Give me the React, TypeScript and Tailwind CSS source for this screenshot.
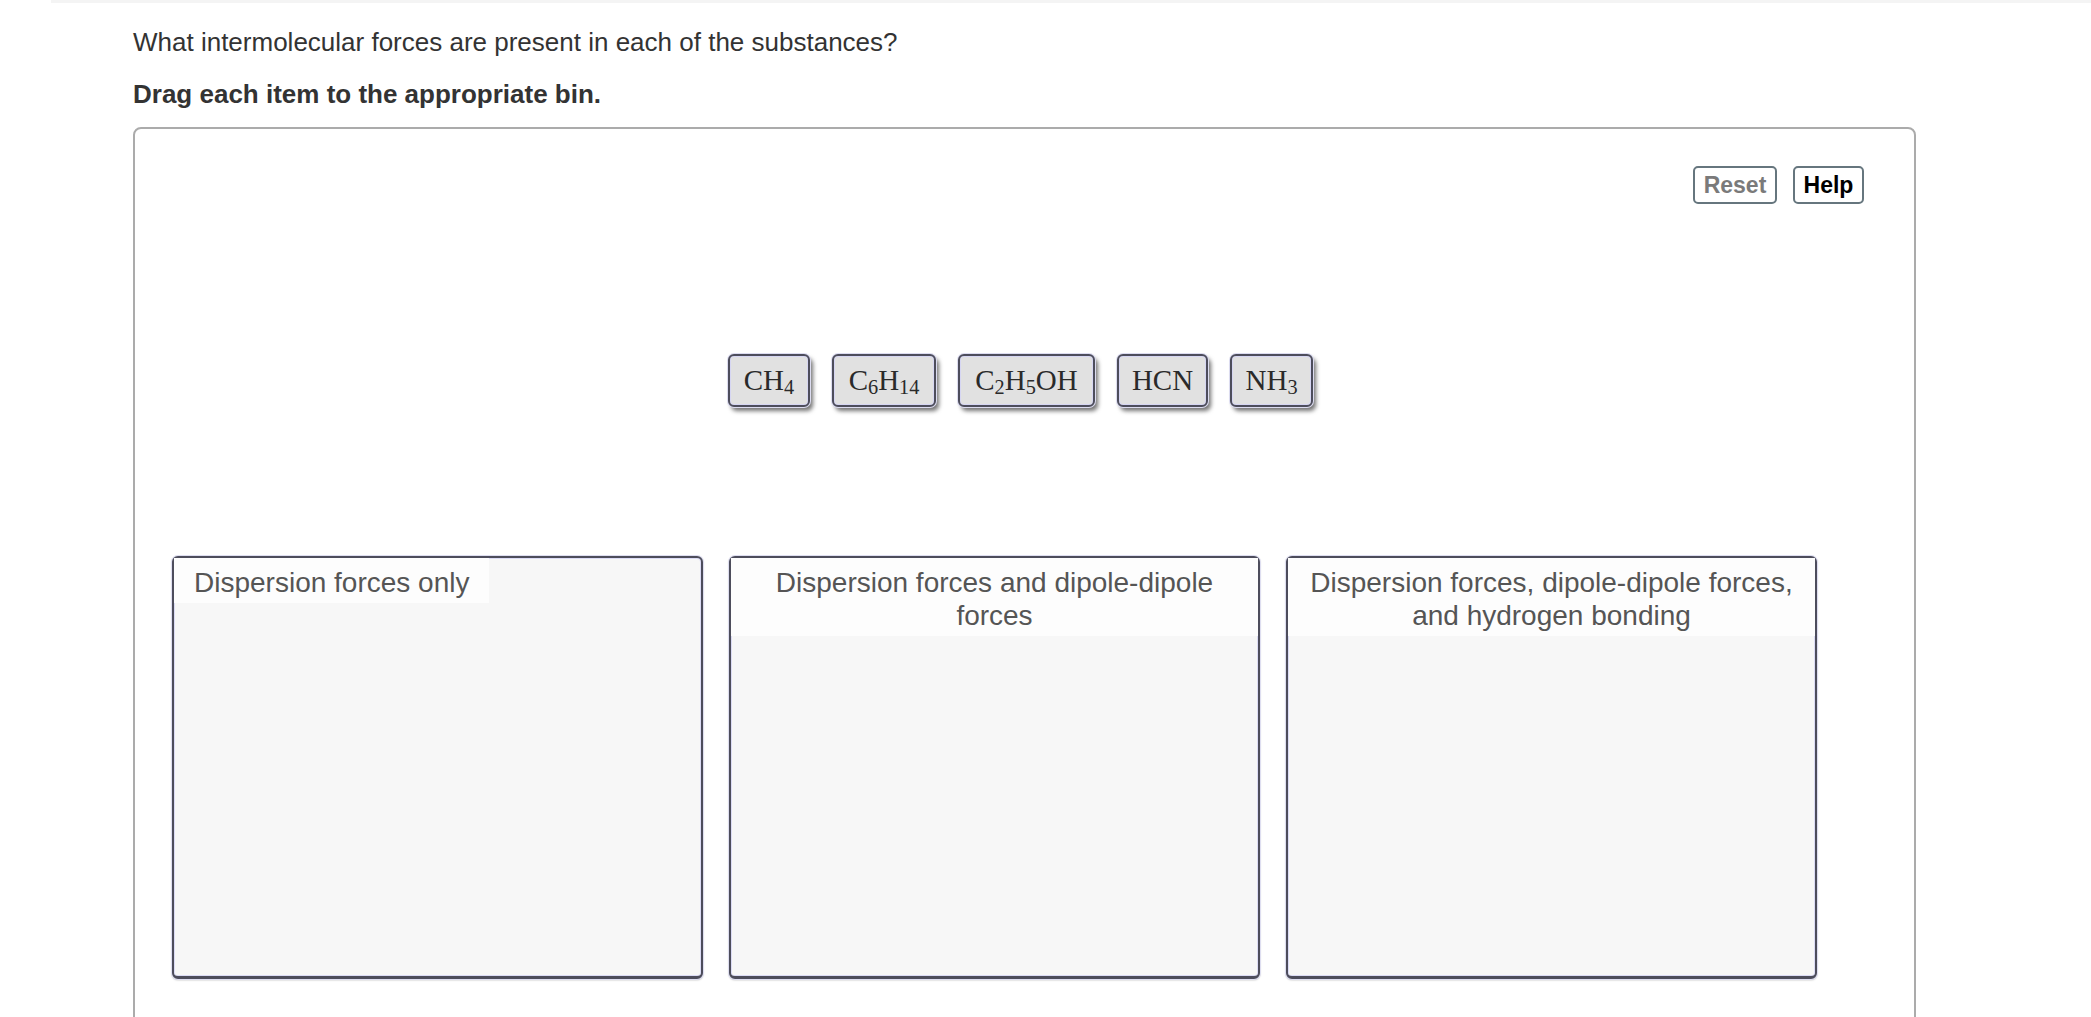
import React from 'react';

interface Chip {
  key: string;
  width: string;
  parts: { t: string; sub?: boolean }[];
}

const chips: Chip[] = [
  { key: 'ch4', width: 'w-[82px]', parts: [{ t: 'CH' }, { t: '4', sub: true }] },
  { key: 'c6h14', width: 'w-[104px]', parts: [{ t: 'C' }, { t: '6', sub: true }, { t: 'H' }, { t: '14', sub: true }] },
  { key: 'c2h5oh', width: 'w-[137px]', parts: [{ t: 'C' }, { t: '2', sub: true }, { t: 'H' }, { t: '5', sub: true }, { t: 'OH' }] },
  { key: 'hcn', width: 'w-[91px]', parts: [{ t: 'HCN' }] },
  { key: 'nh3', width: 'w-[83px]', parts: [{ t: 'NH' }, { t: '3', sub: true }] },
];

const bins = [
  'Dispersion forces only',
  'Dispersion forces and dipole-dipole forces',
  'Dispersion forces, dipole-dipole forces, and hydrogen bonding',
];

export default function App() {
  return (
    <div className="min-h-screen bg-white font-['Liberation_Sans',Arial,sans-serif]">
      {/* strip left by the previous part */}
      <div className="ml-[51px] h-[3px] bg-[#f4f4f4]" />

      <div className="pl-[133px] pr-[175px] pt-[24px]">
        <p className="text-[26px] leading-[31px] text-[#333]">
          What intermolecular forces are present in each of the substances?
        </p>
        <p className="mt-[21px] text-[26px] leading-[31px] font-bold text-[#333]">
          Drag each item to the appropriate bin.
        </p>

        {/* Drag & drop panel */}
        <div className="mt-[17px] h-[1000px] rounded-[8px] border-2 border-[#ababab] pt-[37px]">
          <div className="flex justify-end gap-[16px] pr-[50px]">
            <button className="h-[38px] w-[84px] rounded-[5px] border-2 border-[#66767e] bg-white text-[23px] font-bold text-[#7a7a7a]">
              Reset
            </button>
            <button className="h-[38px] w-[71px] rounded-[5px] border-2 border-[#66767e] bg-white text-[23px] font-bold text-black">
              Help
            </button>
          </div>

          {/* Draggable items */}
          <div className="mt-[150px] flex justify-center gap-[22px] pr-[8px]">
            {chips.map((c) => (
              <div
                key={c.key}
                className={`${c.width} flex h-[53px] items-center justify-center rounded-[6px] border-2 border-[#4d4d5c] bg-[#e1e1e1] font-['Liberation_Serif','Times_New_Roman',serif] text-[29px] text-[#2a2a2a] shadow-[inset_0_0_0_1px_#d6d6f2,0_0_0_1px_#dcdcf0,3px_4px_4px_rgba(0,0,0,0.55)]`}
              >
                <span className="leading-none">
                  {c.parts.map((p, i) =>
                    p.sub ? (
                      <span key={i} className="relative top-[0.22em] text-[0.7em]">
                        {p.t}
                      </span>
                    ) : (
                      <span key={i}>{p.t}</span>
                    )
                  )}
                </span>
              </div>
            ))}
          </div>

          {/* Bins */}
          <div className="mt-[149px] flex gap-[26px] pl-[37px]">
            {bins.map((label) => (
              <div
                key={label}
                className="flex h-[423px] w-[531px] flex-col items-start rounded-[6px] border-2 border-b-[3px] border-[#4d4d5c] bg-[#f7f7f7] shadow-[inset_0_0_0_1px_#dcdcf5,0_0_0_1px_#dedef0,0_1px_2px_rgba(0,0,0,0.35)]"
              >
                <div className="w-fit bg-[#fdfdfd] px-[20px] pt-[8px] pb-[4px] text-center text-[28px] leading-[33px] text-[#555]">
                  {label}
                </div>
              </div>
            ))}
          </div>
        </div>
      </div>
    </div>
  );
}
